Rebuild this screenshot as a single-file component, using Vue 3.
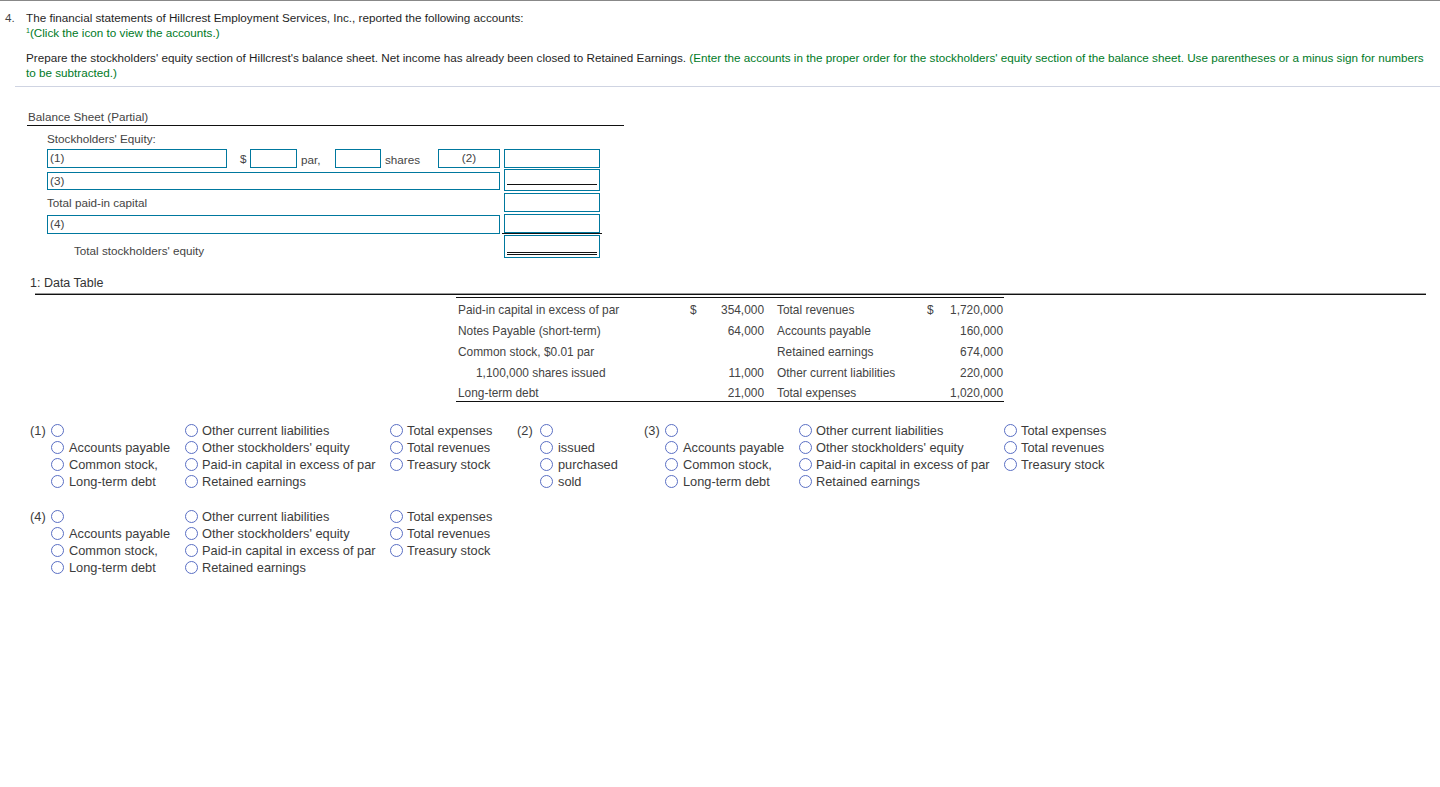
<template>
  <div class="page">
    <div class="question">
      <div class="qnum">4.</div>
      <div class="qtext">
        <div>The financial statements of Hillcrest Employment Services, Inc., reported the following accounts:</div>
        <div class="hint"><sup>1</sup>(Click the icon to view the accounts.)</div>
        <div class="prepare">
          Prepare the stockholders' equity section of Hillcrest's balance sheet. Net income has already been closed to Retained Earnings.
          <span class="hint">(Enter the accounts in the proper order for the stockholders' equity section of the balance sheet. Use parentheses or a minus sign for numbers to be subtracted.)</span>
        </div>
      </div>
    </div>
    <hr class="rule">

    <div class="sheet">
      <div class="sheet-title">Balance Sheet (Partial)</div>
      <div class="sheet-body">
        <div class="sheet-label">Stockholders' Equity:</div>
        <div class="row first-row">
          <div class="left">
            <div class="box acct-short">(1)</div>
            <span class="dollar">$</span>
            <div class="box par-box"></div>
            <span class="word par-word">par,</span>
            <div class="box shares-box"></div>
            <span class="word">shares</span>
            <div class="box verb-box">(2)</div>
          </div>
          <div class="box amount"></div>
        </div>
        <div class="row">
          <div class="box wide short-box">(3)</div>
          <div class="box amount tall-amount"><div class="single"></div></div>
        </div>
        <div class="row">
          <div class="left plain">Total paid-in capital</div>
          <div class="box amount"></div>
        </div>
        <div class="row last-input-row">
          <div class="box wide drop-box">(4)</div>
          <div class="amount-wrap"><div class="box amount"></div></div>
        </div>
        <div class="row total-row">
          <div class="left plain total">Total stockholders' equity</div>
          <div class="box amount total-amount"><div class="double"></div></div>
        </div>
      </div>
    </div>

    <div class="data-title"><span class="data-title-text">1: Data Table</span></div>
    <div class="data-wrap">
      <table class="data">
        <tbody>
          <tr v-for="r in dataRows" :key="r.a">
            <td class="name" :class="{ indent: r.indent }">{{ r.a }}</td>
            <td class="cur">{{ r.s1 }}</td>
            <td class="num">{{ r.n1 }}</td>
            <td class="name2">{{ r.b }}</td>
            <td class="cur2">{{ r.s2 }}</td>
            <td class="num2">{{ r.n2 }}</td>
          </tr>
        </tbody>
      </table>
    </div>

    <div class="options">
      <div class="option-row">
        <div class="group g1">
          <span class="tag">(1)</span>
          <div class="cols">
            <div v-for="(col, i) in accountCols" :key="i" class="col">
              <label v-for="t in col" :key="t"><input type="radio" name="a1"><span>{{ t }}</span></label>
            </div>
          </div>
        </div>
        <div class="group g2">
          <span class="tag">(2)</span>
          <div class="cols">
            <div class="col">
              <label v-for="t in verbs" :key="t"><input type="radio" name="a2"><span>{{ t }}</span></label>
            </div>
          </div>
        </div>
        <div class="group g3">
          <span class="tag">(3)</span>
          <div class="cols">
            <div v-for="(col, i) in accountCols" :key="i" class="col">
              <label v-for="t in col" :key="t"><input type="radio" name="a3"><span>{{ t }}</span></label>
            </div>
          </div>
        </div>
      </div>
      <div class="option-row second">
        <div class="group g1">
          <span class="tag">(4)</span>
          <div class="cols">
            <div v-for="(col, i) in accountCols" :key="i" class="col">
              <label v-for="t in col" :key="t"><input type="radio" name="a4"><span>{{ t }}</span></label>
            </div>
          </div>
        </div>
      </div>
    </div>
  </div>
</template>

<script setup>
const dataRows = [
  { a: 'Paid-in capital in excess of par', s1: '$', n1: '354,000', b: 'Total revenues', s2: '$', n2: '1,720,000' },
  { a: 'Notes Payable (short-term)', s1: '', n1: '64,000', b: 'Accounts payable', s2: '', n2: '160,000' },
  { a: 'Common stock, $0.01 par', s1: '', n1: '', b: 'Retained earnings', s2: '', n2: '674,000' },
  { a: '1,100,000 shares issued', indent: true, s1: '', n1: '11,000', b: 'Other current liabilities', s2: '', n2: '220,000' },
  { a: 'Long-term debt', s1: '', n1: '21,000', b: 'Total expenses', s2: '', n2: '1,020,000' }
]

const accountCols = [
  ['', 'Accounts payable', 'Common stock,', 'Long-term debt'],
  ['Other current liabilities', "Other stockholders' equity", 'Paid-in capital in excess of par', 'Retained earnings'],
  ['Total expenses', 'Total revenues', 'Treasury stock']
]

const verbs = ['', 'issued', 'purchased', 'sold']
</script>

<style>
html, body {
  margin: 0;
  background: #fff;
}
</style>

<style scoped>
.page {
  min-height: 787px;
  box-sizing: border-box;
  border-top: 1px solid #888;
  font-family: "Liberation Sans", Arial, sans-serif;
  font-size: 11.7px;
  color: #333;
}

.question {
  display: flex;
  padding: 9px 12px 0 5px;
  line-height: 15px;
  color: #1f1f1f;
}

.qnum {
  width: 21px;
  flex: none;
  color: #444;
}

.qtext {
  flex: 1;
}

.hint {
  color: #007a1f;
}

sup {
  font-size: 7px;
  line-height: 0;
  vertical-align: 4px;
}

.prepare {
  margin-top: 10px;
}

.rule {
  margin: 6px 0 0 15px;
  border: 0;
  border-top: 1px solid #cfd4e2;
}

.sheet {
  width: 597px;
  margin: 22px 0 0 27px;
}

.sheet-title {
  border-bottom: 1px solid #111;
  padding-left: 1px;
  line-height: 15px;
  height: 15px;
  color: #444;
  padding-bottom: 1px;
}

.sheet-body {
  padding-left: 20px;
}

.sheet-label {
  margin-top: 5px;
  line-height: 15px;
  height: 18px;
  color: #444;
}

.row {
  display: flex;
  align-items: flex-start;
  gap: 4px;
  margin-bottom: 2px;
}

.first-row {
  margin-bottom: 1px;
}

.last-input-row {
  margin-bottom: 1px;
}

.left {
  width: 453px;
  flex: none;
  display: flex;
  align-items: center;
  color: #444;
}

.plain {
  height: 19px;
}

.total {
  height: 23px;
  padding: 8px 0 0 27px;
  box-sizing: border-box;
}

.box {
  box-sizing: border-box;
  height: 19px;
  border: 1px solid #00789e;
  background: #fff;
  padding-left: 2px;
  line-height: 16px;
  color: #444;
}

.acct-short {
  width: 180px;
}

.dollar {
  margin-left: 13px;
  width: 10px;
}

.par-box {
  width: 47px;
}

.par-word {
  width: 38px;
  box-sizing: border-box;
}

.word {
  padding-left: 4px;
  padding-top: 2px;
}

.shares-box {
  width: 46px;
}

.verb-box {
  width: 62px;
  margin-left: auto;
  text-align: center;
  padding-left: 0;
}

.wide {
  width: 453px;
  flex: none;
}

.short-box {
  height: 18px;
  margin-top: 3px;
  line-height: 15px;
}

.drop-box {
  margin-top: 1px;
}

.amount {
  width: 96px;
  flex: none;
  padding: 0;
}

.tall-amount {
  height: 22px;
}

.single {
  margin: 0 2px;
  height: 14px;
  border-bottom: 1px solid #111;
}

.amount-wrap {
  flex: none;
  width: 100px;
  margin-left: -2px;
  padding: 0 2px;
  box-sizing: border-box;
  border-bottom: 1px solid #111;
}

.total-row {
  margin-bottom: 0;
}

.total-amount {
  height: 23px;
}

.double {
  margin: 0 2px;
  height: 16px;
  border-bottom: 3px double #111;
}

.data-title {
  margin: 18px 14px 0 35px;
  padding-bottom: 2px;
  font-size: 12.5px;
  line-height: 15px;
  color: #333;
  border-bottom: 1px solid #999;
  box-shadow: 0 1px 0 #111;
}

.data-title-text {
  margin-left: -5px;
}

.data-wrap {
  margin-top: 3px;
  padding-left: 456px;
}

.data {
  width: 548px;
  table-layout: fixed;
  border-collapse: collapse;
  border-top: 1px solid #111;
  border-bottom: 1px solid #111;
  font-size: 11.9px;
}

.data td {
  height: 21px;
  padding: 4px 0 0;
  box-sizing: border-box;
  white-space: nowrap;
  color: #444;
}

.data tr:last-child td {
  height: 20px;
}

.data .name {
  width: 234px;
  padding-left: 2px;
}

.data .indent {
  padding-left: 20px;
}

.cur {
  width: 15px;
}

.num {
  width: 59px;
  text-align: right;
}

.data .name2 {
  width: 163px;
  padding-left: 13px;
}

.cur2 {
  width: 12px;
}

.data .num2 {
  padding-right: 1px;
  text-align: right;
}

.options {
  margin-top: 20px;
  margin-left: 30px;
  font-size: 12.8px;
  color: #3c3c3c;
}

.option-row {
  display: flex;
}

.second {
  margin-top: 18px;
}

.group {
  display: flex;
}

.g1 {
  width: 487px;
}

.g2 {
  width: 127px;
}

.tag {
  width: 21px;
  flex: none;
  line-height: 17px;
}

.g2 .tag {
  width: 23px;
}

.cols {
  display: flex;
}

.col {
  display: flex;
  flex-direction: column;
}

.col:nth-child(1) {
  width: 134px;
}

.col:nth-child(2) {
  width: 205px;
}

label {
  display: flex;
  align-items: center;
  height: 17px;
  white-space: nowrap;
}

input[type="radio"] {
  appearance: none;
  box-sizing: border-box;
  width: 13px;
  height: 13px;
  margin: 0 4px 0 0;
  border: 1.5px solid #5a6fc4;
  border-radius: 50%;
  background: #fff;
  flex: none;
}

.col:nth-child(1) input[type="radio"] {
  margin-right: 5px;
}
</style>
